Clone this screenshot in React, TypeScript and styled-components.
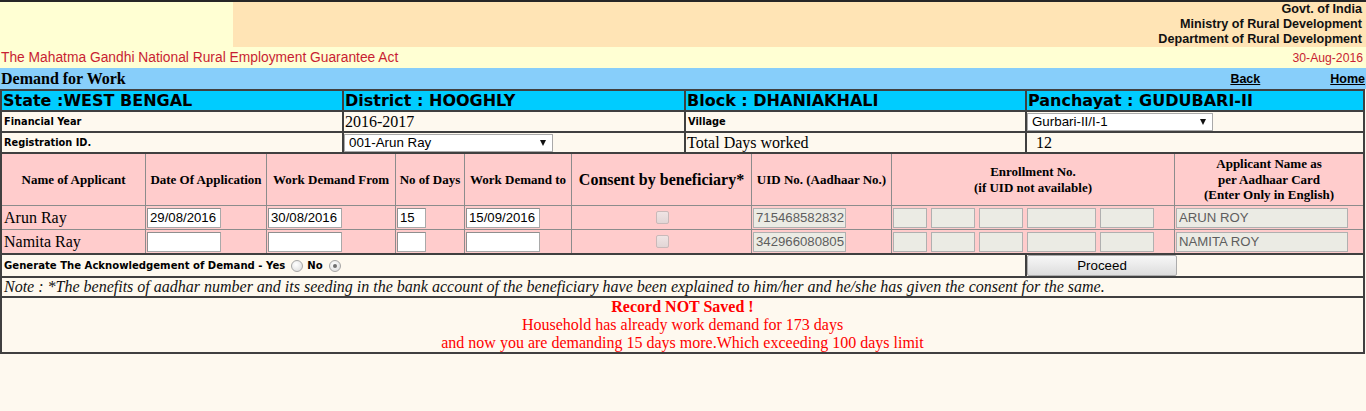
import React from "react";
import styled, { createGlobalStyle } from "styled-components";

const SANS = `"Liberation Sans", Arial, sans-serif`;
const VERDANA = `"DejaVu Sans", Verdana, sans-serif`;
const SERIF = `"Liberation Serif", "Times New Roman", serif`;

const GlobalStyle = createGlobalStyle`
  *, *::before, *::after { box-sizing: border-box; }
  html, body { margin: 0; padding: 0; background: #fef9ef; }
  body { font-family: ${SERIF}; font-size: 16px; color: #000; }
`;

const Page = styled.div`
  width: 1366px;
`;

const Masthead = styled.header`
  display: grid;
  grid-template-columns: 233px 1fr;
  grid-template-rows: 45px 21px;
  border-top: 2px solid #262626;
  background: #ffffd3;
`;

const Blank = styled.div``;

const Ministry = styled.div`
  background: #ffe4b5;
  padding-right: 4px;
  text-align: right;
  font: bold 12.6px/15px ${SANS};
  color: #111;
`;

const ActLine = styled.div`
  grid-column: 1 / -1;
  display: flex;
  align-items: center;
  justify-content: space-between;
  padding: 0 3px 0 1px;
  font-family: ${SANS};
  color: #c81e32;
`;

const ActName = styled.span`
  font-size: 13.8px;
`;

const ActDate = styled.span`
  font-size: 12.2px;
`;

const TitleBar = styled.div`
  display: flex;
  align-items: center;
  height: 21px;
  background: #87cefa;
  padding: 0 1px;
`;

const PageTitle = styled.h1`
  flex: 1;
  margin: 0;
  font: bold 16px/21px ${SERIF};
`;

const NavLink = styled.a`
  font: bold 12.5px ${SANS};
  color: #000;
  text-decoration: underline;
  & + & {
    margin-left: 70px;
  }
`;

const FormGrid = styled.div`
  display: grid;
  width: 1365px;
  grid-template-columns: 340px 340px 339px 336px;
  grid-template-rows: 19px 19px 19px 99px 21px 18px 54px;
  gap: 2px;
  padding: 2px;
  background: #404040;
`;

const Cell = styled.div<{ $tone?: "cyan" | "cream"; $span?: number }>`
  grid-column: span ${(p) => p.$span ?? 1};
  display: flex;
  align-items: center;
  padding-left: 1px;
  background: ${(p) => (p.$tone === "cyan" ? "#00ccff" : "#fef9ef")};
  overflow: hidden;
`;

const Region = styled.span`
  font: bold 16px/19px ${VERDANA};
  color: #000;
  white-space: nowrap;
`;

const Label = styled.span`
  font: bold 9.8px ${VERDANA};
  padding-left: 1px;
`;

const Value = styled.span`
  font: 16px/19px ${SERIF};
  white-space: pre;
`;

const SelectShell = styled.span<{ $w: number }>`
  display: inline-flex;
  align-items: center;
  width: ${(p) => p.$w}px;
  height: 18px;
  background: #fff;
  border: 1px solid #a9a9a9;
  margin-left: -1px;
`;

const NativeSelect = styled.select`
  flex: 1;
  min-width: 0;
  height: 100%;
  appearance: none;
  -webkit-appearance: none;
  border: none;
  outline: none;
  background: transparent;
  padding: 0 0 0 4px;
  font: 13.33px ${SANS};
  color: #000;
`;

const Caret = styled.span`
  width: 0;
  height: 0;
  margin-right: 6px;
  border-left: 3.5px solid transparent;
  border-right: 3.5px solid transparent;
  border-top: 6px solid #111;
`;

const PinkGrid = styled.div`
  grid-column: 1 / -1;
  display: grid;
  grid-template-columns: 143px 120px 128px 68px 106px 179px 139px 282px 188px;
  grid-template-rows: 51px 23px 23px;
  gap: 1px;
  background: #8c8c8c;
`;

const HeadCell = styled.div<{ $big?: boolean }>`
  display: flex;
  align-items: center;
  justify-content: center;
  text-align: center;
  background: #ffcccc;
  font: bold ${(p) => (p.$big ? 16 : 13)}px/15.5px ${SERIF};
`;

const DataCell = styled.div<{ $center?: boolean }>`
  display: flex;
  align-items: center;
  justify-content: ${(p) => (p.$center ? "center" : "flex-start")};
  gap: 4px;
  padding-left: 1px;
  background: #ffcccc;
`;

const PersonName = styled.span`
  font: 16px ${SERIF};
  padding-left: 1px;
`;

const TextField = styled.input<{ $w: number }>`
  width: ${(p) => p.$w}px;
  height: 20px;
  margin: 0;
  padding: 0 1px 0 2px;
  border: 1px solid #a9a9a9;
  border-top-color: #8f8f8f;
  border-left-color: #8f8f8f;
  background: #fff;
  font: 13.2px ${SANS};
  color: #000;
  &:disabled {
    background: #ebebe4;
    color: #5e5e5e;
    border-color: #b0b0b0;
  }
`;

const Consent = styled.input`
  appearance: none;
  -webkit-appearance: none;
  width: 13px;
  height: 13px;
  margin: 0;
  border: 1px solid #c9b9b9;
  border-radius: 2px;
  background: linear-gradient(#f0e4e4, #e2d6d6);
`;

const AckText = styled.span`
  display: inline-flex;
  align-items: center;
  font: bold 10.1px ${VERDANA};
  padding-left: 1px;
`;

const Radio = styled.input`
  appearance: none;
  -webkit-appearance: none;
  display: inline-grid;
  place-content: center;
  width: 12px;
  height: 12px;
  margin: 0 4px 0 6px;
  border: 1px solid #a6a6a6;
  border-radius: 50%;
  background: radial-gradient(circle at 40% 35%, #ffffff, #d9d9d9);
  &::before {
    content: "";
    width: 4px;
    height: 4px;
    border-radius: 50%;
    background: transparent;
  }
  &:checked::before {
    background: #6f6f6f;
  }
`;

const ProceedButton = styled.button`
  width: 150px;
  height: 21px;
  margin: 0 0 0 -1px;
  padding: 0;
  border: 1px solid #acacac;
  border-radius: 2px;
  background: linear-gradient(#f7f7f7, #dddddd);
  font: 13.33px ${SANS};
  color: #000;
`;

const Note = styled.span`
  font: italic 16px/18px ${SERIF};
  color: #111;
  padding-left: 1px;
  white-space: nowrap;
`;

const Message = styled.div`
  grid-column: 1 / -1;
  display: flex;
  flex-direction: column;
  align-items: center;
  justify-content: center;
  background: #fef9ef;
  color: #ff0000;
  font: 16px/18px ${SERIF};
`;

const MessageTitle = styled.strong`
  font-weight: bold;
`;

type Row = {
  name: string;
  date: string;
  from: string;
  days: string;
  to: string;
  uid: string;
  aadhaarName: string;
};

const rows: Row[] = [
  {
    name: "Arun Ray",
    date: "29/08/2016",
    from: "30/08/2016",
    days: "15",
    to: "15/09/2016",
    uid: "715468582832",
    aadhaarName: "ARUN ROY",
  },
  {
    name: "Namita Ray",
    date: "",
    from: "",
    days: "",
    to: "",
    uid: "342966080805",
    aadhaarName: "NAMITA ROY",
  },
];

const enrollWidths = [34, 44, 44, 69, 54];

export default function App() {
  return (
    <>
      <GlobalStyle />
      <Page>
        <Masthead>
          <Blank />
          <Ministry>
            Govt. of India
            <br />
            Ministry of Rural Development
            <br />
            Department of Rural Development
          </Ministry>
          <ActLine>
            <ActName>The Mahatma Gandhi National Rural Employment Guarantee Act</ActName>
            <ActDate>30-Aug-2016</ActDate>
          </ActLine>
        </Masthead>

        <TitleBar>
          <PageTitle>Demand for Work</PageTitle>
          <NavLink href="#">Back</NavLink>
          <NavLink href="#">Home</NavLink>
        </TitleBar>

        <FormGrid>
          <Cell $tone="cyan">
            <Region>State :WEST BENGAL</Region>
          </Cell>
          <Cell $tone="cyan">
            <Region>District : HOOGHLY</Region>
          </Cell>
          <Cell $tone="cyan">
            <Region>Block : DHANIAKHALI</Region>
          </Cell>
          <Cell $tone="cyan">
            <Region>Panchayat : GUDUBARI-II</Region>
          </Cell>

          <Cell>
            <Label>Financial Year</Label>
          </Cell>
          <Cell>
            <Value>2016-2017</Value>
          </Cell>
          <Cell>
            <Label>Village</Label>
          </Cell>
          <Cell>
            <SelectShell $w={186}>
              <NativeSelect defaultValue="Gurbari-II/I-1">
                <option>Gurbari-II/I-1</option>
              </NativeSelect>
              <Caret />
            </SelectShell>
          </Cell>

          <Cell>
            <Label>Registration ID.</Label>
          </Cell>
          <Cell>
            <SelectShell $w={209}>
              <NativeSelect defaultValue="001-Arun Ray">
                <option>001-Arun Ray</option>
              </NativeSelect>
              <Caret />
            </SelectShell>
          </Cell>
          <Cell>
            <Value>Total Days worked</Value>
          </Cell>
          <Cell>
            <Value>{"\u00a0\u00a012"}</Value>
          </Cell>

          <PinkGrid>
            <HeadCell>Name of Applicant</HeadCell>
            <HeadCell>Date Of Application</HeadCell>
            <HeadCell>Work Demand From</HeadCell>
            <HeadCell>No of Days</HeadCell>
            <HeadCell>Work Demand to</HeadCell>
            <HeadCell $big>Consent by beneficiary*</HeadCell>
            <HeadCell>UID No. (Aadhaar No.)</HeadCell>
            <HeadCell>
              Enrollment No.
              <br />
              (if UID not available)
            </HeadCell>
            <HeadCell>
              Applicant Name as
              <br />
              per Aadhaar Card
              <br />
              (Enter Only in English)
            </HeadCell>

            {rows.map((r) => (
              <React.Fragment key={r.name}>
                <DataCell>
                  <PersonName>{r.name}</PersonName>
                </DataCell>
                <DataCell>
                  <TextField $w={74} defaultValue={r.date} />
                </DataCell>
                <DataCell>
                  <TextField $w={74} defaultValue={r.from} />
                </DataCell>
                <DataCell>
                  <TextField $w={29} defaultValue={r.days} />
                </DataCell>
                <DataCell>
                  <TextField $w={74} defaultValue={r.to} />
                </DataCell>
                <DataCell $center>
                  <Consent type="checkbox" disabled />
                </DataCell>
                <DataCell>
                  <TextField $w={93} disabled defaultValue={r.uid} />
                </DataCell>
                <DataCell>
                  {enrollWidths.map((w, i) => (
                    <TextField key={i} $w={w} disabled defaultValue="" />
                  ))}
                </DataCell>
                <DataCell>
                  <TextField $w={172} disabled defaultValue={r.aadhaarName} />
                </DataCell>
              </React.Fragment>
            ))}
          </PinkGrid>

          <Cell $span={3}>
            <AckText>
              Generate The Acknowledgement of Demand - Yes
              <Radio type="radio" name="ack" disabled />
              No
              <Radio type="radio" name="ack" disabled defaultChecked />
            </AckText>
          </Cell>
          <Cell>
            <ProceedButton type="button">Proceed</ProceedButton>
          </Cell>

          <Cell $span={4}>
            <Note>
              Note : *The benefits of aadhar number and its seeding in the bank account of the
              beneficiary have been explained to him/her and he/she has given the consent for the
              same.
            </Note>
          </Cell>

          <Message>
            <MessageTitle>Record NOT Saved !</MessageTitle>
            <span>Household has already work demand for 173 days</span>
            <span>and now you are demanding 15 days more.Which exceeding 100 days limit</span>
          </Message>
        </FormGrid>
      </Page>
    </>
  );
}
